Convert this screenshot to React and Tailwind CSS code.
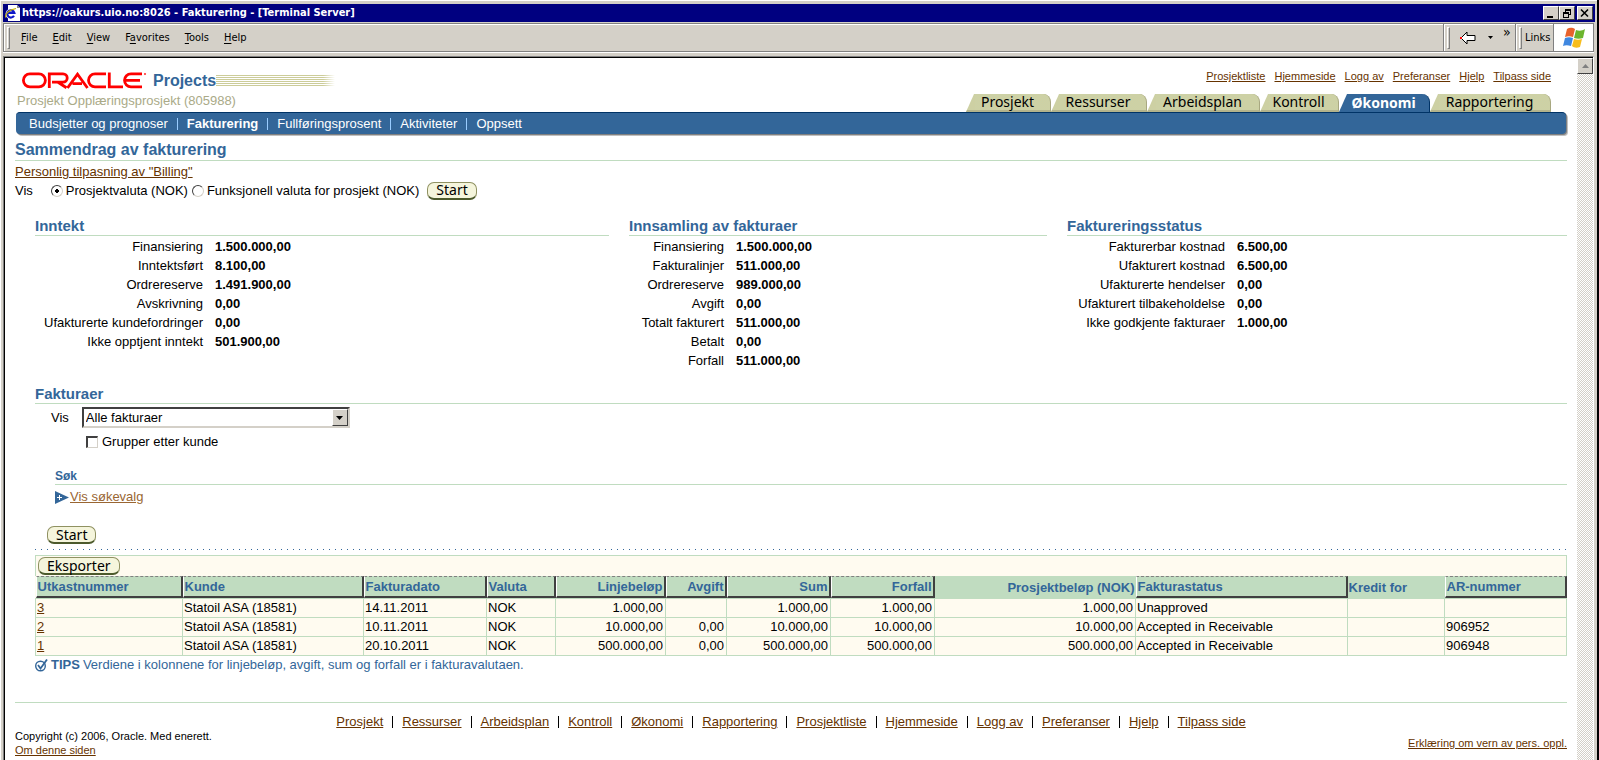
const topLinks = ['Prosjektliste', 'Hjemmeside', 'Logg av', 'Preferanser', 'Hjelp', 'Tilpass side']

const tabs = [
  { label: 'Prosjekt', width: 'w-[85px]' },
  { label: 'Ressurser', width: 'w-[96px]' },
  { label: 'Arbeidsplan', width: 'w-[113px]' },
  { label: 'Kontroll', width: 'w-[79px]' },
  { label: 'Økonomi', width: 'w-[91px]', active: true },
  { label: 'Rapportering', width: 'w-[121px]' },
]

const subTabs = ['Budsjetter og prognoser', 'Fakturering', 'Fullføringsprosent', 'Aktiviteter', 'Oppsett']

const footerLinks = ['Prosjekt', 'Ressurser', 'Arbeidsplan', 'Kontroll', 'Økonomi', 'Rapportering', ...topLinks]

const revenue = [
  ['Finansiering', '1.500.000,00'],
  ['Inntektsført', '8.100,00'],
  ['Ordrereserve', '1.491.900,00'],
  ['Avskrivning', '0,00'],
  ['Ufakturerte kundefordringer', '0,00'],
  ['Ikke opptjent inntekt', '501.900,00'],
]

const collection = [
  ['Finansiering', '1.500.000,00'],
  ['Fakturalinjer', '511.000,00'],
  ['Ordrereserve', '989.000,00'],
  ['Avgift', '0,00'],
  ['Totalt fakturert', '511.000,00'],
  ['Betalt', '0,00'],
  ['Forfall', '511.000,00'],
]

const billingStatus = [
  ['Fakturerbar kostnad', '6.500,00'],
  ['Ufakturert kostnad', '6.500,00'],
  ['Ufakturerte hendelser', '0,00'],
  ['Ufakturert tilbakeholdelse', '0,00'],
  ['Ikke godkjente fakturaer', '1.000,00'],
]

const columns = [
  { key: 'draft', label: 'Utkastnummer', width: 'w-[147px]', sortable: true },
  { key: 'customer', label: 'Kunde', width: 'w-[181px]', sortable: true },
  { key: 'date', label: 'Fakturadato', width: 'w-[123px]', sortable: true },
  { key: 'currency', label: 'Valuta', width: 'w-[69px]', sortable: true },
  { key: 'line', label: 'Linjebeløp', width: 'w-[110px]', sortable: true, right: true },
  { key: 'tax', label: 'Avgift', width: 'w-[61px]', sortable: true, right: true },
  { key: 'sum', label: 'Sum', width: 'w-[104px]', sortable: true, right: true },
  { key: 'due', label: 'Forfall', width: 'w-[104px]', sortable: true, right: true },
  { key: 'project', label: 'Prosjektbeløp (NOK)', width: 'w-[201px]', right: true },
  { key: 'status', label: 'Fakturastatus', width: 'w-[212px]', sortable: true },
  { key: 'credit', label: 'Kredit for', width: 'w-[97px]' },
  { key: 'ar', label: 'AR-nummer', width: 'w-auto', sortable: true },
]

const invoices = [
  { draft: '3', customer: 'Statoil ASA (18581)', date: '14.11.2011', currency: 'NOK', line: '1.000,00', tax: '', sum: '1.000,00', due: '1.000,00', project: '1.000,00', status: 'Unapproved', credit: '', ar: '' },
  { draft: '2', customer: 'Statoil ASA (18581)', date: '10.11.2011', currency: 'NOK', line: '10.000,00', tax: '0,00', sum: '10.000,00', due: '10.000,00', project: '10.000,00', status: 'Accepted in Receivable', credit: '', ar: '906952' },
  { draft: '1', customer: 'Statoil ASA (18581)', date: '20.10.2011', currency: 'NOK', line: '500.000,00', tax: '0,00', sum: '500.000,00', due: '500.000,00', project: '500.000,00', status: 'Accepted in Receivable', credit: '', ar: '906948' },
]

function IeIcon() {
  return (
    <svg width="16" height="16" viewBox="0 0 16 16" aria-hidden="true">
      <path d="M3 0h9l3 3v13H3z" fill="#fff" />
      <path d="M12 0v3h3z" fill="#848484" />
      <path d="M9 10.8A3.6 3.6 0 1 1 9.4 8H2.6" fill="none" stroke="#fff" strokeWidth="3.6" />
      <path d="M9 10.8A3.6 3.6 0 1 1 9.4 8H2.6" fill="none" stroke="#1018c8" strokeWidth="2.2" />
      <path d="M0.8 12.5C0 9.5 3 5 11 3.5" fill="none" stroke="#c8b400" strokeWidth="1.2" />
    </svg>
  )
}

function WindowButton({ label, className = '', children }) {
  return (
    <button aria-label={label} className={`flex h-[14px] w-4 items-center justify-center border border-t-white border-l-white border-r-[#404040] border-b-[#404040] bg-[#d4d0c8] ${className}`}>
      <svg width="12" height="11" viewBox="0 0 12 11" fill="none" stroke="#000" shapeRendering="crispEdges" aria-hidden="true">{children}</svg>
    </button>
  )
}

function TitleBar() {
  return (
    <div className="flex h-[18px] items-center bg-[#000080] px-[2px] font-['DejaVu_Sans_Condensed','DejaVu_Sans',sans-serif] text-[11px] font-bold text-white">
      <IeIcon />
      <span className="ml-px flex-1 whitespace-nowrap">https://oakurs.uio.no:8026 - Fakturering - [Terminal Server]</span>
      <WindowButton label="Minimize"><path d="M2 9h6" strokeWidth="2" /></WindowButton>
      <WindowButton label="Restore">
        <path d="M4 1h6M4 2h6M4.5 2v2M9.5 2v5M8 6.5h2M2 4h6M2 5h6M2.5 5v5M7.5 5v5M2 9.5h6" />
      </WindowButton>
      <WindowButton label="Close" className="ml-[2px]"><path d="M2 1.5l7 7M9 1.5l-7 7" strokeWidth="1.6" shapeRendering="auto" /></WindowButton>
    </div>
  )
}

function Grip() {
  return <span className="h-[22px] w-[3px] border border-t-white border-l-white border-r-[#808080] border-b-[#808080]" />
}

function MenuItem({ before = '', hot, after }) {
  return (
    <button className="whitespace-nowrap">
      {before}<span className="underline underline-offset-2">{hot}</span>{after}
    </button>
  )
}

function MenuBar() {
  return (
    <div className="mt-px mr-px flex h-[29px] items-stretch border border-[#808080] font-['DejaVu_Sans_Condensed','DejaVu_Sans',sans-serif] text-[11px] text-black shadow-[0_1px_0_#ffffff]">
      <nav className="flex flex-1 items-center border-t border-l border-white pl-[2px]">
        <Grip />
        <div className="ml-[11px] flex gap-[15px]">
          <MenuItem hot="F" after="ile" />
          <MenuItem hot="E" after="dit" />
          <MenuItem hot="V" after="iew" />
          <MenuItem before="F" hot="a" after="vorites" />
          <MenuItem hot="T" after="ools" />
          <MenuItem hot="H" after="elp" />
        </div>
      </nav>
      <div className="flex w-[72px] items-center border-l border-[#808080] pl-[3px] shadow-[inset_1px_1px_0_#ffffff]">
        <Grip />
        <button aria-label="Back" className="ml-2.5 flex items-center gap-3">
          <svg width="16" height="14" viewBox="0 0 16 14" aria-hidden="true">
            <path d="M1 7l6-6v3.5h8v5H7V13z" fill="#fff" stroke="#000" />
            <path d="M0 6h2v2H0z" fill="#f00" />
          </svg>
          <svg width="5" height="3" viewBox="0 0 5 3" aria-hidden="true"><path d="M0 0h5L2.5 3z" /></svg>
        </button>
        <span className="ml-2.5 self-start pt-[2px] text-sm leading-3">»</span>
      </div>
      <div className="flex w-[38px] items-center border-l border-[#808080] pl-[3px] shadow-[inset_1px_1px_0_#ffffff]">
        <Grip />
        <span className="ml-[3px]">Links</span>
      </div>
      <div className="flex w-10 items-center justify-center border-l border-[#808080] bg-white">
        <svg width="24" height="22" viewBox="0 0 24 22" aria-hidden="true">
          <path d="M5 2c3-2 6-1 8 0l-2 8c-3-1-5-1-8 0z" fill="#e8622c" />
          <path d="M14 3c3 1 6 1 9-1l-2 9c-3 1-6 1-9 0z" fill="#6cb52d" />
          <path d="M3 11c3-1 5-1 8 0l-2 8c-3-1-6-1-8 0z" fill="#3f87e0" />
          <path d="M12 12c3 1 5 1 8 0l-2 8c-3 1-6 1-8-1z" fill="#f7bd1d" />
        </svg>
      </div>
    </div>
  )
}

function OracleLogo() {
  return (
    <svg width="125" height="17" viewBox="0 0 125 17" fill="none" stroke="#f00" strokeWidth="2.8" role="img" aria-label="Oracle">
      <rect x="1.4" y="1.8" width="22" height="13" rx="6.5" />
      <path d="M27.3 16V1.8H41a4.2 4.2 0 0 1 0 8.4H30M36 10.2l8.5 5.5" />
      <path d="M45.5 16L55.5 2.2L65.5 16M50.5 11.6H60" />
      <path d="M84 1.8H73a6.5 6.5 0 0 0 0 13h11" />
      <path d="M87.3 0.5V14.8H101" />
      <path d="M120 1.8H109a6.5 6.5 0 0 0 0 13h11M103.5 8.3H118" />
      <circle cx="123" cy="2" r="0.7" strokeWidth="0.8" />
    </svg>
  )
}

function Tab({ label, width, active }) {
  return (
    <a href="#" aria-current={active ? 'page' : undefined} className={`flex h-[18px] ${width}`}>
      <svg width="9" height="18" viewBox="0 0 9 18" aria-hidden="true">
        <path d="M0 18L8 0H9V18z" fill={active ? '#336699' : '#cdd0a3'} />
        {!active && <path d="M0 18L1 16H9V18z" fill="#b3b38c" />}
      </svg>
      <span className={`flex flex-1 items-center justify-center rounded-tr-lg border-r pr-2.5 font-['Noto_Sans',sans-serif] text-sm leading-none ${active ? 'border-[#003366] bg-[#336699] font-bold text-white' : 'border-b-2 border-[#a8a880] border-b-[#b3b38c] bg-[#cdd0a3] bg-[repeating-conic-gradient(#d0d0a2_0_25%,#cad2a8_0_50%)] bg-[length:2px_2px] text-black'}`}>
        {label}
      </span>
    </a>
  )
}

function PillButton({ children, className = '' }) {
  return (
    <button className={`h-[18px] rounded-[7px] border border-b-2 border-[#8f9161] border-b-[#4c5a2c] bg-[#f5f5dc] px-2 font-['Noto_Sans',sans-serif] text-sm leading-none text-black ${className}`}>
      {children}
    </button>
  )
}

function SectionHeading({ children }) {
  return <h2 className="border-b border-[#c0dcc0] text-[15px] leading-[19px] font-bold text-[#336699]">{children}</h2>
}

function Summary({ title, rows, className, labelWidth }) {
  return (
    <section className={className}>
      <SectionHeading>{title}</SectionHeading>
      <dl className="pt-px">
        {rows.map(([name, value]) => (
          <div key={name} className="flex h-[19px] items-center gap-3">
            <dt className={`text-right whitespace-nowrap ${labelWidth}`}>{name}</dt>
            <dd className="font-bold">{value}</dd>
          </div>
        ))}
      </dl>
    </section>
  )
}

function PageHeader() {
  return (
    <header className="ml-px">
      <div className="flex items-end justify-between pl-px">
        <div>
          <div className="flex items-center pl-[5px]">
            <OracleLogo />
            <span className="ml-1.5 text-base leading-[21px] font-bold text-[#336699]">Projects</span>
            <span className="h-[11px] w-[119px] bg-[repeating-linear-gradient(#cccc99_0_1px,#ffffff_1px_2px)] mask-r-from-90%" />
          </div>
          <p className="pb-px text-[13px] leading-5 text-[#aaaa88]">Prosjekt Opplæringsprosjekt (805988)</p>
        </div>
        <div className="flex flex-col items-end gap-2.5 pr-4">
          <nav className="flex gap-[9px] text-[11px] leading-4 text-[#663300]">
            {topLinks.map((link) => <a key={link} href="#" className="underline">{link}</a>)}
          </nav>
          <nav className="flex">
            {tabs.map((tab) => <Tab key={tab.label} {...tab} />)}
          </nav>
        </div>
      </div>
      <nav className="mr-px flex h-[22px] items-center rounded-sm border-t border-[#003366] bg-[#336699] pl-[13px] text-white shadow-[1px_1px_0_#808080,2px_2px_0_#c0c0c0]">
        {subTabs.map((tab, i) => (
          <span key={tab} className="flex items-center">
            {i > 0 && <span className="mx-[9px] h-3 w-px bg-[#99ccff]" />}
            <a href="#" className={tab === 'Fakturering' ? 'font-bold' : ''}>{tab}</a>
          </span>
        ))}
      </nav>
    </header>
  )
}

function CurrencyForm() {
  return (
    <form className="flex h-[19px] items-center" onSubmit={(e) => e.preventDefault()}>
      <span className="mr-[18px]">Vis</span>
      <label className="flex items-center gap-[3px]">
        <input type="radio" name="currency" defaultChecked className="size-3 appearance-none rounded-full border border-[#d4d0c8] border-t-[#404040] border-l-[#404040] bg-white bg-[radial-gradient(circle,#000_0_2px,transparent_2px)]" />
        Prosjektvaluta (NOK)
      </label>
      <label className="ml-1 flex items-center gap-[3px]">
        <input type="radio" name="currency" className="size-3 appearance-none rounded-full border border-[#d4d0c8] border-t-[#404040] border-l-[#404040] bg-white" />
        Funksjonell valuta for prosjekt (NOK)
      </label>
      <PillButton className="ml-2">Start</PillButton>
    </form>
  )
}

function InvoiceTable() {
  return (
    <div>
      <div className="flex h-[21px] items-center border border-b-0 border-[#c0dcc0] bg-[#fffbf0] px-[2px]">
        <PillButton>Eksporter</PillButton>
      </div>
      <table className="w-full table-fixed border-collapse bg-[#fffbf0]">
        <colgroup>
          {columns.map((col) => <col key={col.key} className={col.width} />)}
        </colgroup>
        <thead>
          <tr className="h-[22px] bg-[#c0dcc0] text-[#336699]">
            {columns.map((col) => (
              <th key={col.key} scope="col" className={`overflow-hidden p-0 whitespace-nowrap ${col.right ? 'text-right' : 'text-left'}`}>
                <div className={`h-[22px] px-px leading-5 ${col.sortable ? 'border-t border-r-2 border-b-2 border-l border-t-[#808080] border-r-[#404040] border-b-[#404040] border-l-white [border-top-style:dashed]' : 'pt-[2px]'}`}>
                  {col.label}
                </div>
              </th>
            ))}
          </tr>
        </thead>
        <tbody>
          {invoices.map((row) => (
            <tr key={row.draft} className="h-[19px]">
              {columns.map((col) => (
                <td key={col.key} className={`border border-[#c0dcc0] py-0 leading-[18px] whitespace-nowrap ${col.right ? 'pr-[2px] text-right' : 'pl-px'}`}>
                  {col.key === 'draft' ? <a href="#" className="text-[#663300] underline">{row.draft}</a> : row[col.key]}
                </td>
              ))}
            </tr>
          ))}
        </tbody>
      </table>
    </div>
  )
}

function Invoices() {
  return (
    <section className="mt-3.5 pl-5">
      <SectionHeading>Fakturaer</SectionHeading>
      <div className="mt-[3px] flex items-center pl-4">
        <label htmlFor="view" className="mr-[13px]">Vis</label>
        <div className="relative flex">
          <select id="view" className="h-[21px] w-[268px] appearance-none rounded-none border-2 border-t-[#404040] border-r-[#d4d0c8] border-b-[#d4d0c8] border-l-[#404040] bg-white pl-[2px] text-[13px] leading-none text-black">
            <option>Alle fakturaer</option>
          </select>
          <span className="pointer-events-none absolute top-[2px] right-[2px] flex h-[17px] w-4 items-center justify-center border border-t-white border-l-white border-r-[#404040] border-b-[#404040] bg-[#d4d0c8]">
            <svg width="7" height="4" viewBox="0 0 7 4" aria-hidden="true"><path d="M0 0h7L3.5 4z" /></svg>
          </span>
        </div>
      </div>
      <label className="mt-1 flex h-5 items-center gap-1 pl-[51px]">
        <input type="checkbox" className="size-3 appearance-none border border-[#d4d0c8] border-t-2 border-l-2 border-t-[#404040] border-l-[#404040] bg-white" />
        Grupper etter kunde
      </label>
      <div className="mt-4 pl-5">
        <h3 className="border-b border-[#c0dcc0] text-xs leading-4 font-bold text-[#336699]">Søk</h3>
        <a href="#" className="mt-[3px] flex h-[18px] items-center text-[#996633]">
          <svg width="14" height="13" viewBox="0 0 14 13" aria-hidden="true">
            <path d="M0 0L14 6.5L0 13z" fill="#336699" />
            <path d="M4.5 4v5M2 6.5h5" stroke="#fff" />
          </svg>
          <span className="ml-px underline">Vis søkevalg</span>
        </a>
      </div>
      <div className="mt-5 flex pl-3">
        <PillButton>Start</PillButton>
      </div>
      <div className="mt-[5px] mb-[5px] h-px bg-[repeating-linear-gradient(to_right,#336699_0_1px,transparent_1px_6px)]" />
      <InvoiceTable />
      <p className="flex h-[18px] items-center text-[#336699]">
        <svg width="13" height="13" viewBox="0 0 13 13" fill="none" aria-hidden="true">
          <circle cx="5.5" cy="7" r="4.8" stroke="#336699" strokeWidth="1.4" />
          <path d="M3 6l2.5 3.5L12 0.5" stroke="#336699" strokeWidth="1.8" />
        </svg>
        <b className="mx-[3px]">TIPS</b> Verdiene i kolonnene for linjebeløp, avgift, sum og forfall er i fakturavalutaen.
      </p>
    </section>
  )
}

function PageFooter() {
  return (
    <footer className="mt-7 border-t border-[#c0dcc0] pt-3 text-[#663300]">
      <nav className="flex items-center justify-center leading-[14px]">
        {footerLinks.map((link, i) => (
          <span key={link} className="flex items-center">
            {i > 0 && <span className="mx-[9px] h-3 w-px bg-black" />}
            <a href="#" className="underline">{link}</a>
          </span>
        ))}
      </nav>
      <div className="flex items-center justify-between text-[11px] leading-[14px]">
        <div>
          <p className="text-black">Copyright (c) 2006, Oracle. Med enerett.</p>
          <a href="#" className="underline">Om denne siden</a>
        </div>
        <a href="#" className="underline">Erklæring om vern av pers. oppl.</a>
      </div>
    </footer>
  )
}

function ScrollBar() {
  return (
    <div className="w-4 shrink-0 bg-[repeating-conic-gradient(#ffffff_0_25%,#d4d0c8_0_50%)] bg-[length:2px_2px]">
      <button aria-label="Scroll up" className="flex h-4 w-4 items-center justify-center border border-t-white border-l-white border-r-[#404040] border-b-[#404040] bg-[#d4d0c8]">
        <svg width="7" height="4" viewBox="0 0 7 4" aria-hidden="true"><path d="M0 4h7L3.5 0z" fill="#808080" /></svg>
      </button>
    </div>
  )
}

export default function App() {
  return (
    <div className="flex min-h-screen flex-col border-r-2 border-black bg-[#d4d0c8] pt-1 pr-[2px] pl-[3px] font-['Liberation_Sans',Arial,sans-serif] text-[13px] leading-[18px] text-black shadow-[inset_1px_1px_0_#ffffff]">
      <TitleBar />
      <MenuBar />
      <div className="mt-1 mr-px flex flex-1 border border-b-0 border-t-[#808080] border-r-white border-l-[#808080]">
        <div className="flex min-w-0 flex-1 border-t border-l border-black">
          <main className="min-w-0 flex-1 bg-white pt-2.5 pr-2.5 pl-2.5">
            <PageHeader />
            <h1 className="mt-1.5 border-b border-[#c0dcc0] text-base leading-5 font-bold text-[#336699]">Sammendrag av fakturering</h1>
            <a href="#" className="mt-[2px] block w-fit text-[#663300] underline">Personlig tilpasning av "Billing"</a>
            <CurrencyForm />
            <div className="mt-4 flex gap-5 pl-5">
              <Summary title="Inntekt" rows={revenue} className="flex-[574]" labelWidth="w-[168px]" />
              <Summary title="Innsamling av fakturaer" rows={collection} className="flex-[418]" labelWidth="w-[95px]" />
              <Summary title="Faktureringsstatus" rows={billingStatus} className="flex-[500]" labelWidth="w-[158px]" />
            </div>
            <Invoices />
            <PageFooter />
          </main>
          <ScrollBar />
        </div>
      </div>
    </div>
  )
}
